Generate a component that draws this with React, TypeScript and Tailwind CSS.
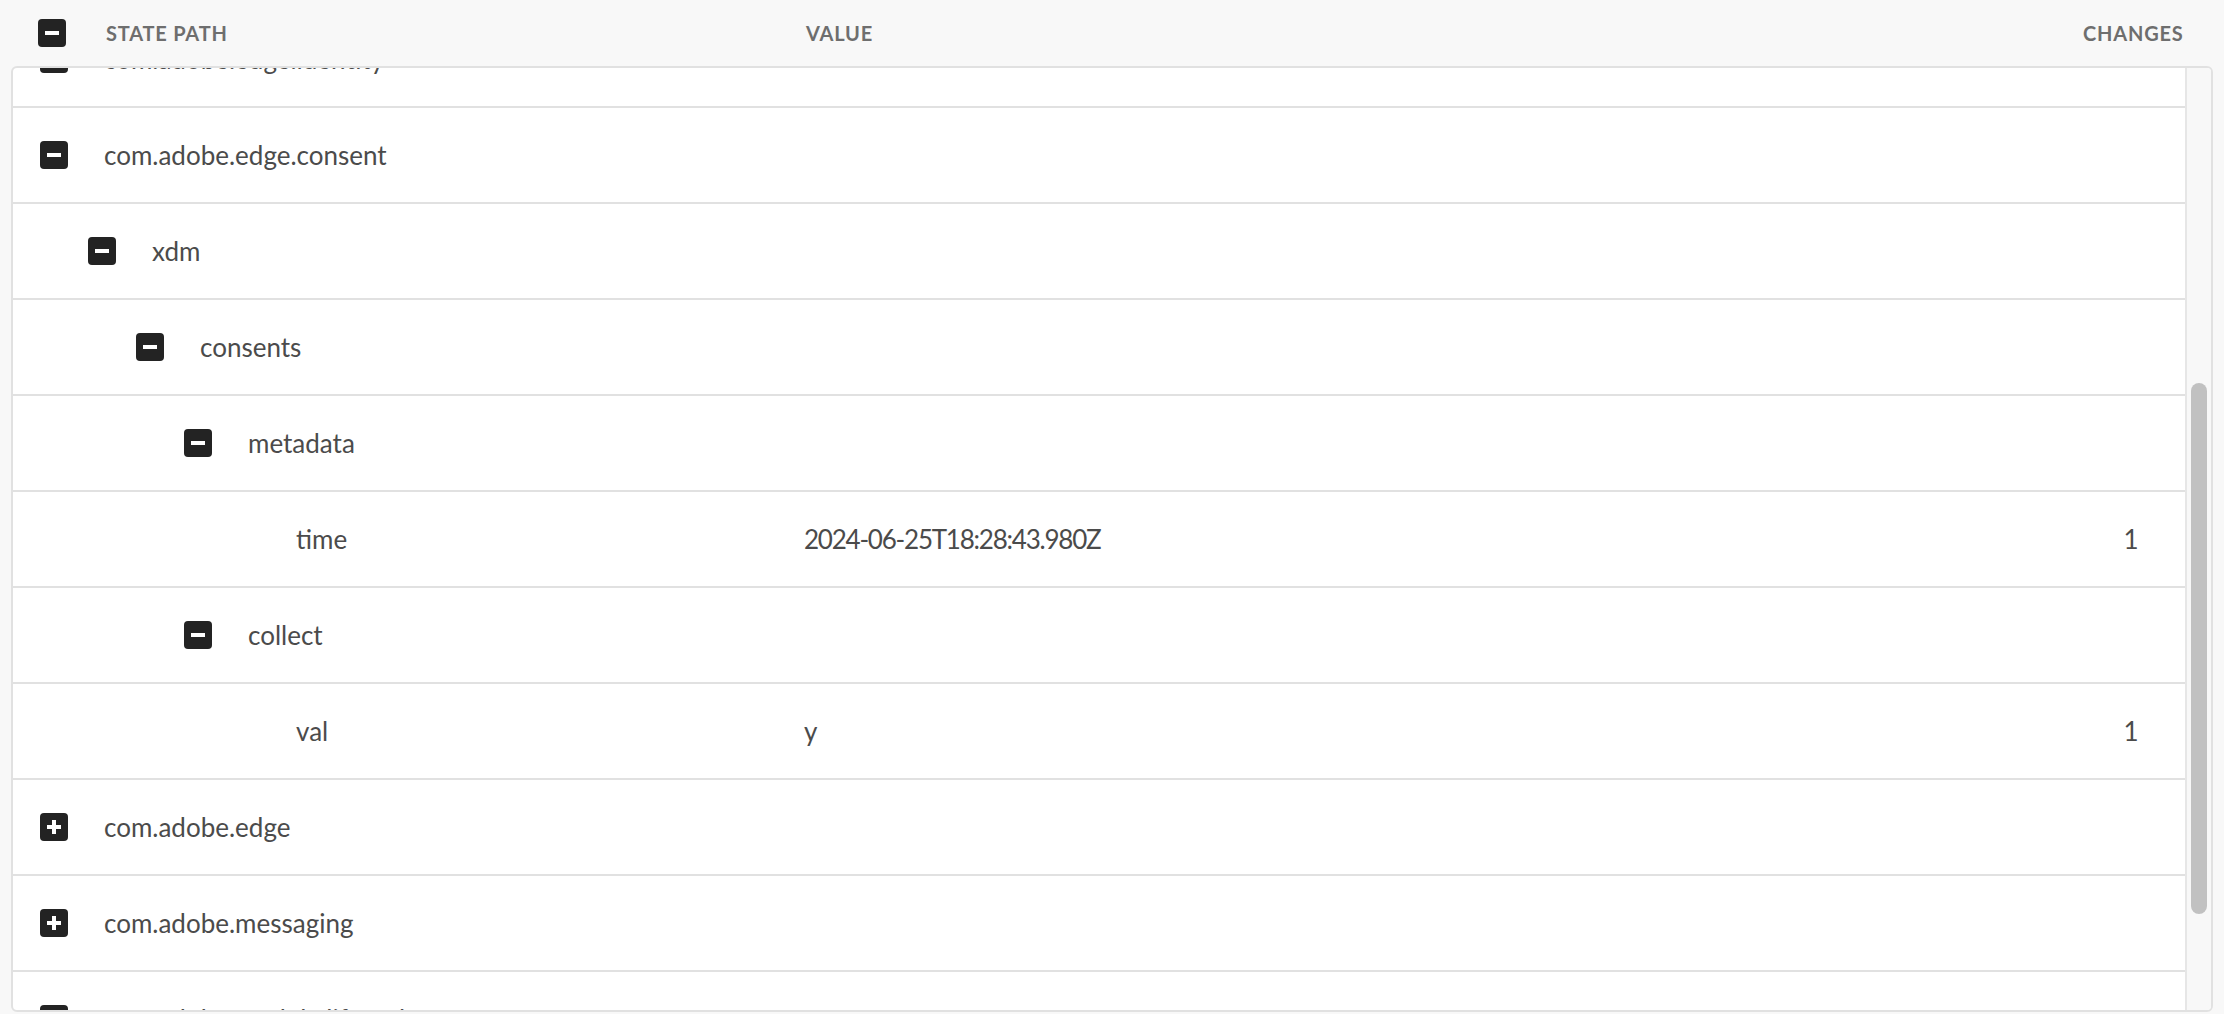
import React from "react";

type Row = {
  name: string;
  level: number;
  kind: "open" | "closed" | "leaf";
  value?: string;
  changes?: number;
};

const rows: Row[] = [
  { name: "com.adobe.edge.identity", level: 0, kind: "open" },
  { name: "com.adobe.edge.consent", level: 0, kind: "open" },
  { name: "xdm", level: 1, kind: "open" },
  { name: "consents", level: 2, kind: "open" },
  { name: "metadata", level: 3, kind: "open" },
  { name: "time", level: 4, kind: "leaf", value: "2024-06-25T18:28:43.980Z", changes: 1 },
  { name: "collect", level: 3, kind: "open" },
  { name: "val", level: 4, kind: "leaf", value: "y", changes: 1 },
  { name: "com.adobe.edge", level: 0, kind: "closed" },
  { name: "com.adobe.messaging", level: 0, kind: "closed" },
  { name: "com.adobe.module.lifecycle", level: 0, kind: "open" },
];

function ToggleIcon({ open }: { open: boolean }) {
  return (
    <svg width="28" height="28" viewBox="0 0 28 28" className="shrink-0">
      <rect x="0" y="0" width="28" height="28" rx="4" fill="#232323" />
      <rect x="7" y="12" width="14" height="4" fill="#fff" />
      {!open && <rect x="12" y="7" width="4" height="14" fill="#fff" />}
    </svg>
  );
}

// indent per level is 48px, icon + gap is 64px
const indents = ["pl-[27px]", "pl-[75px]", "pl-[123px]", "pl-[171px]", "pl-[219px]"];

function TreeRow({ row }: { row: Row }) {
  return (
    <div className="flex h-[96px] shrink-0 items-center border-b-2 border-[#e1e1e1]">
      <div className={`flex w-[791px] shrink-0 items-center gap-[36px] ${indents[row.level]}`}>
        {row.kind === "leaf" ? (
          <span className="h-[28px] w-[28px] shrink-0" />
        ) : (
          <ToggleIcon open={row.kind === "open"} />
        )}
        <span className="whitespace-nowrap">{row.name}</span>
      </div>
      <div className="flex-1 whitespace-nowrap tracking-[-0.047em]">{row.value}</div>
      <div className="w-[108px] shrink-0 text-center">{row.changes}</div>
    </div>
  );
}

export default function App() {
  return (
    <div className="flex h-[1014px] w-[2224px] flex-col overflow-hidden bg-[#f8f8f8] font-['Lato',sans-serif] text-[#4b4b4b]">
      {/* Header */}
      <div className="flex h-[66px] shrink-0 items-center text-[20px] font-bold uppercase tracking-[0.04em] text-[#6e6e6e]">
        <div className="w-[106px] shrink-0 pl-[38px]">
          <ToggleIcon open />
        </div>
        <div className="w-[700px] shrink-0">State Path</div>
        <div className="flex-1">Value</div>
        <div className="mr-[41px] w-[100px] shrink-0 text-right">Changes</div>
      </div>

      {/* Body */}
      <div className="mx-[11px] flex h-[946px] shrink-0 overflow-hidden rounded-md border-2 border-[#e1e1e1] bg-white text-[26px]">
        <div className="flex-1 overflow-hidden">
          <div className="-mt-[56px] flex flex-col">
            {rows.map((row, i) => (
              <TreeRow key={`${row.name}-${i}`} row={row} />
            ))}
          </div>
        </div>
        <div className="flex w-[26px] shrink-0 justify-center border-l-2 border-[#e6e6e6] bg-[#f8f8f8]">
          <div className="mt-[315px] h-[531px] w-[16px] rounded-full bg-[#c1c1c1]" />
        </div>
      </div>
    </div>
  );
}
